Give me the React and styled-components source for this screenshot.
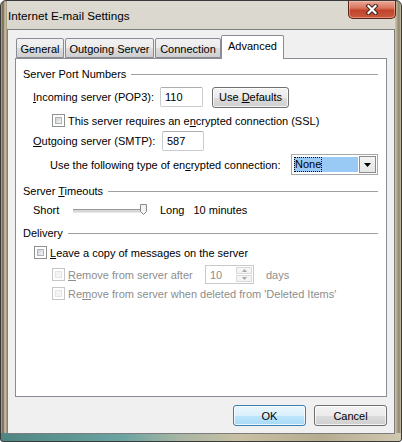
import React from "react";
import styled, { createGlobalStyle } from "styled-components";

const GlobalStyle = createGlobalStyle`
  html, body { margin: 0; padding: 0; background: #fff; }
  * { box-sizing: border-box; }
`;

const FONT = `"Liberation Sans", Arial, sans-serif`;
const FS = "11px";

const Window = styled.div`
  width: 402px;
  height: 442px;
  display: flex;
  flex-direction: column;
  border: 1px solid #3a3a3a;
  border-radius: 6px 6px 3px 3px;
  overflow: hidden;
  font-family: ${FONT};
  font-size: ${FS};
  color: #000;
  background:
    linear-gradient(to right, #4f8682 0%, #6aa3a2 30%, #a9b6a3 45%, #c9c0a4 60%, #b6ac90 80%, #d0c8b0 100%) bottom / 100% 8px no-repeat,
    linear-gradient(to right, #b8ae93 0px, #6a604c 2px, #cfc6ac 4px, #9d937a 6px) left / 6px 100% no-repeat,
    linear-gradient(to right, #cfc6ac 0px, #b0a68b 2px, #8c8470 4px, #c8bfa5 6px) right / 6px 100% no-repeat,
    linear-gradient(180deg, #dcd9d1 0%, #d2cdc1 40%, #cbc5b6 100%);
`;

const TitleBar = styled.div`
  height: 28px;
  flex: none;
  display: flex;
  align-items: flex-start;
  justify-content: space-between;
  padding-left: 7px;
`;

const Title = styled.span`
  font-size: 11.7px;
  line-height: 29px;
  color: #000;
`;

const CloseButton = styled.div`
  width: 48px;
  height: 18px;
  margin-right: 5px;
  border: 1px solid #5c2218;
  border-top: none;
  border-radius: 0 0 5px 5px;
  background: linear-gradient(180deg, #e9a996 0%, #d9765f 40%, #c1442b 55%, #c95a3e 100%);
  box-shadow: inset 0 0 0 1px rgba(255, 210, 190, 0.45);
  display: flex;
  align-items: center;
  justify-content: center;
`;

const Client = styled.div`
  flex: 1;
  margin: 0 6px 8px;
  border: 1px solid #7d7d7d;
  background: #f0f0f0;
  display: flex;
  flex-direction: column;
  padding: 5px 7px 7px;
`;

const TabStrip = styled.div`
  height: 23px;
  display: flex;
  align-items: flex-end;
  padding-left: 1px;
  position: relative;
  z-index: 1;
`;

const Tab = styled.div`
  width: ${(p) => p.$w}px;
  height: ${(p) => (p.$active ? 24 : 20)}px;
  margin-left: ${(p) => p.$ml}px;
  margin-bottom: ${(p) => (p.$active ? -1 : 0)}px;
  border: 1px solid #898c95;
  border-bottom: ${(p) => (p.$active ? "none" : "1px solid #898c95")};
  border-radius: 2px 2px 0 0;
  background: ${(p) =>
    p.$active
      ? "#fff"
      : "linear-gradient(180deg, #f2f2f2 0%, #ebebeb 50%, #dddddd 51%, #cfcfcf 100%)"};
  font-size: ${FS};
  display: flex;
  align-items: ${(p) => (p.$active ? "flex-start" : "center")};
  padding-top: ${(p) => (p.$active ? 4 : 1)}px;
  justify-content: center;
  white-space: nowrap;
`;

const Page = styled.div`
  height: 339px;
  flex: none;
  border: 1px solid #898c95;
  background: #fff;
  padding: 7px 8px 0 7px;
  display: flex;
  flex-direction: column;
`;

const GroupHeader = styled.div`
  display: flex;
  align-items: center;
  height: 15px;
  margin-top: ${(p) => p.$top}px;
  font-size: ${FS};
  white-space: nowrap;
  &::after {
    content: "";
    flex: 1;
    height: 1px;
    margin-left: 5px;
    margin-top: 1px;
    background: #a0a0a0;
  }
`;

const Row = styled.div`
  display: flex;
  align-items: center;
  height: ${(p) => p.$h}px;
  margin-top: ${(p) => p.$top}px;
  margin-left: ${(p) => p.$indent}px;
  font-size: ${FS};
  color: ${(p) => (p.$disabled ? "#8d8d8d" : "#000")};
`;

const Label = styled.span`
  width: ${(p) => (p.$w ? `${p.$w}px` : "auto")};
  flex: none;
  white-space: nowrap;
  margin-left: ${(p) => p.$ml || 0}px;
`;

const U = styled.span`
  text-decoration: underline;
  text-underline-offset: 1px;
`;

const TextBox = styled.div`
  width: ${(p) => p.$w}px;
  height: 20px;
  flex: none;
  border: 1px solid #c8cbd0;
  border-top-color: #abadb3;
  border-radius: 2px;
  background: #fff;
  padding-left: 4px;
  display: flex;
  align-items: center;
  font-size: ${FS};
`;

const Button = styled.div`
  width: ${(p) => p.$w}px;
  height: 21px;
  flex: none;
  margin-left: ${(p) => p.$ml || 0}px;
  border: 1px solid ${(p) => (p.$default ? "#3c7fb1" : "#707070")};
  border-radius: 3px;
  background: ${(p) =>
    p.$default
      ? "linear-gradient(180deg, #eaf6fd 0%, #d9f0fc 50%, #bee6fd 51%, #a7d9f5 100%)"
      : "linear-gradient(180deg, #f2f2f2 0%, #ebebeb 50%, #dddddd 51%, #cfcfcf 100%)"};
  box-shadow: inset 0 0 0 1px rgba(255, 255, 255, 0.75);
  display: flex;
  align-items: center;
  justify-content: center;
  font-size: ${FS};
  color: #000;
  white-space: nowrap;
`;

const Check = styled.span`
  width: 13px;
  height: 13px;
  flex: none;
  margin-right: 3px;
  border: 1px solid ${(p) => (p.$disabled ? "#c6c6c6" : "#8e8f8f")};
  background: #fff;
  padding: 2px;
  display: flex;
  &::before {
    content: "";
    flex: 1;
    border: 1px solid ${(p) => (p.$disabled ? "#e4e4e4" : "#aeb3b9")};
    background: ${(p) =>
      p.$disabled
        ? "#f4f4f4"
        : "linear-gradient(135deg, #cbcfd5 0%, #f6f6f6 100%)"};
  }
`;

const Combo = styled.div`
  width: 87px;
  height: 21px;
  flex: none;
  margin-left: ${(p) => p.$ml}px;
  border: 1px solid #a8a8a8;
  background: #fff;
  padding: 2px 1px 2px 2px;
  display: flex;
  gap: 1px;
`;

const ComboValue = styled.div`
  flex: 1;
  background: #99c9f5;
  display: flex;
  align-items: center;
  padding-left: 1px;
  font-size: ${FS};
`;

const FocusText = styled.span`
  outline: 1px dotted #000;
  outline-offset: 0;
  line-height: 13px;
`;

const ComboButton = styled.div`
  width: 17px;
  margin-top: -1px;
  margin-bottom: -1px;
  border: 1px solid #8c8c8c;
  background: linear-gradient(180deg, #f4f4f4 0%, #e6e6e6 100%);
  display: flex;
  align-items: center;
  justify-content: center;
`;

const Track = styled.div`
  width: 72px;
  height: 11px;
  flex: none;
  position: relative;
  &::before {
    content: "";
    position: absolute;
    left: 0;
    right: 2px;
    top: 4px;
    height: 2px;
    border-top: 1px solid #9a9a9a;
    border-bottom: 1px solid #e8e8e8;
    background: #d6d6d6;
  }
`;

const Thumb = styled.svg`
  position: absolute;
  right: -2px;
  top: -1px;
`;

const Spinner = styled.div`
  width: 49px;
  height: 19px;
  flex: none;
  margin-left: ${(p) => p.$ml}px;
  border: 1px solid #c9c9c9;
  background: #fff;
  display: flex;
  font-size: ${FS};
  color: #8d8d8d;
`;

const SpinValue = styled.div`
  flex: 1;
  display: flex;
  align-items: center;
  padding-left: 4px;
`;

const SpinButtons = styled.div`
  width: 17px;
  display: flex;
  flex-direction: column;
  padding: 1px 1px 1px 0;
  gap: 1px;
`;

const SpinHalf = styled.div`
  flex: 1;
  border: 1px solid #d9d9d9;
  background: #f4f4f4;
  display: flex;
  align-items: center;
  justify-content: center;
`;

const ButtonRow = styled.div`
  display: flex;
  justify-content: flex-end;
  gap: 8px;
  margin-top: 8px;
`;

const CloseIcon = () => (
  <svg width="14" height="11" viewBox="0 0 14 11">
    <path d="M3.5 2L10.5 9M10.5 2L3.5 9" stroke="#3f2520" strokeWidth="4.2" strokeLinecap="square" />
    <path d="M3.5 2L10.5 9M10.5 2L3.5 9" stroke="#fff" strokeWidth="2.2" strokeLinecap="square" />
  </svg>
);

export default function App() {
  return (
    <>
      <GlobalStyle />
      <Window>
        <TitleBar>
          <Title>Internet E-mail Settings</Title>
          <CloseButton>
            <CloseIcon />
          </CloseButton>
        </TitleBar>
        <Client>
          <TabStrip>
            <Tab $w={48} $ml={0}>General</Tab>
            <Tab $w={89} $ml={1}>Outgoing Server</Tab>
            <Tab $w={66} $ml={1}>Connection</Tab>
            <Tab $w={63} $ml={0} $active>Advanced</Tab>
          </TabStrip>
          <Page>
            <GroupHeader $top={0}><span>Server Port Numbers</span></GroupHeader>
            <Row $h={20} $top={6} $indent={10}>
              <Label $w={127}><U>I</U>ncoming server (POP3):</Label>
              <TextBox $w={43}>110</TextBox>
              <Button $w={77} $ml={9}><span>Use <U>D</U>efaults</span></Button>
            </Row>
            <Row $h={17} $top={5} $indent={29}>
              <Check />
              <Label>This server requires an e<U>n</U>crypted connection (SSL)</Label>
            </Row>
            <Row $h={20} $top={2} $indent={10}>
              <Label $w={129}><U>O</U>utgoing server (SMTP):</Label>
              <TextBox $w={42}>587</TextBox>
            </Row>
            <Row $h={21} $top={3} $indent={27}>
              <Label $w={241}>Use the following type of en<U>c</U>rypted connection:</Label>
              <Combo $ml={0}>
                <ComboValue>
                  <FocusText>None</FocusText>
                </ComboValue>
                <ComboButton>
                  <svg width="7" height="4" viewBox="0 0 7 4">
                    <path d="M0 0H7L3.5 4Z" fill="#000" />
                  </svg>
                </ComboButton>
              </Combo>
            </Row>
            <GroupHeader $top={8}><span>Server <U>T</U>imeouts</span></GroupHeader>
            <Row $h={18} $top={3} $indent={10}>
              <Label $w={40}>Short</Label>
              <Track>
                <Thumb width="7" height="11" viewBox="0 0 7 11">
                  <path d="M0.5 0.5H6.5V7.5L3.5 10.5L0.5 7.5Z" fill="#f2f2f2" stroke="#8a8a8a" />
                </Thumb>
              </Track>
              <Label $ml={15}>Long</Label>
              <Label $ml={9}>10 minutes</Label>
            </Row>
            <GroupHeader $top={6}><span>Delivery</span></GroupHeader>
            <Row $h={17} $top={4} $indent={11}>
              <Check />
              <Label><U>L</U>eave a copy of messages on the server</Label>
            </Row>
            <Row $h={19} $top={4} $indent={29} $disabled>
              <Check $disabled />
              <Label $w={137}><U>R</U>emove from server after</Label>
              <Spinner $ml={0}>
                <SpinValue>10</SpinValue>
                <SpinButtons>
                  <SpinHalf>
                    <svg width="5" height="3" viewBox="0 0 5 3"><path d="M0 3H5L2.5 0Z" fill="#a8a8a8" /></svg>
                  </SpinHalf>
                  <SpinHalf>
                    <svg width="5" height="3" viewBox="0 0 5 3"><path d="M0 0H5L2.5 3Z" fill="#a8a8a8" /></svg>
                  </SpinHalf>
                </SpinButtons>
              </Spinner>
              <Label $ml={12}>days</Label>
            </Row>
            <Row $h={17} $top={1} $indent={29} $disabled>
              <Check $disabled />
              <Label>Re<U>m</U>ove from server when deleted from 'Deleted Items'</Label>
            </Row>
          </Page>
          <ButtonRow>
            <Button $w={73} $default>OK</Button>
            <Button $w={73}>Cancel</Button>
          </ButtonRow>
        </Client>
      </Window>
    </>
  );
}
